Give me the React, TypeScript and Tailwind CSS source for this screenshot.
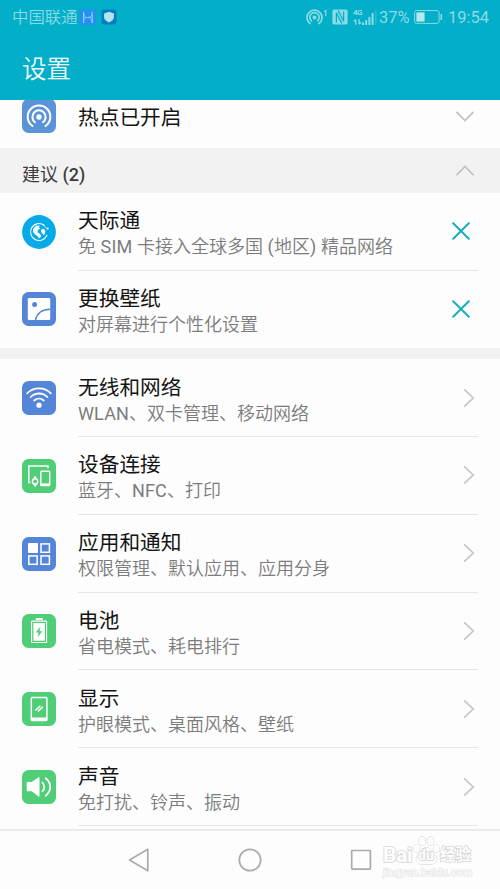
import type { ReactNode } from "react";

const ICON_BLUE = "#5585d9";
const ICON_GREEN = "#50cd77";

function Tile({ color, children }: { color: string; children: ReactNode }) {
    return (
        <svg width="34" height="34" viewBox="0 0 34 34" fill="none" className="block shrink-0">
            <rect width="34" height="34" rx="6.5" fill={color} />
            {children}
        </svg>
    );
}

function HotspotIcon() {
    return (
        <Tile color="#5b93d8">
            <circle cx="17" cy="18" r="2.7" fill="#fff" />
            <g stroke="#fff" strokeWidth="2" strokeLinecap="round">
                <path d="M13 23.2A6.6 6.6 0 1 1 21 23.2" />
                <path d="M10.5 27A11.3 11.3 0 1 1 23.5 27" />
            </g>
        </Tile>
    );
}

function GlobeIcon() {
    return (
        <svg width="34" height="34" viewBox="0 0 34 34" fill="none" className="block shrink-0">
            <circle cx="17" cy="17" r="16.9" fill="#05aaeb" />
            <path
                d="M24.9 20.2A8.5 8.5 0 1 1 22.3 10.3"
                stroke="#fff"
                strokeWidth="1.1"
                strokeLinecap="round"
            />
            <path d="M21.5 10.3l3.3 3.2" stroke="#fff" strokeWidth="1" strokeDasharray="1.2 .8" />
            <circle cx="25.6" cy="13.6" r="1.1" fill="#fff" />
            <path d="M10.9 14.2l3-3.5 3.8-.2-.9 1.7 1.5 1.3-2.2 1.3-.6 2.4 2.6 1.9 1.300 2-2.200 2.500-1.800-2.600-2.300-1.400-1.800-2.300z" fill="#fff" />
            <path d="M19.2 14.5l3.1-.7 1.1 2.9-1.4 3.5-1.4-1.500-1.500-1.800z" fill="#fff" />
        </svg>
    );
}

function WallpaperIcon() {
    return (
        <Tile color={ICON_BLUE}>
            <rect x="5.8" y="6" width="22.4" height="22" rx="1.2" fill="#fff" />
            <circle cx="12.6" cy="12.4" r="2.5" fill={ICON_BLUE} />
            <path d="M13.4 28C15 21.5 20.5 17.4 28.2 17.3" stroke={ICON_BLUE} strokeWidth="1.5" />
        </Tile>
    );
}

function WifiIcon() {
    return (
        <Tile color={ICON_BLUE}>
            <circle cx="17" cy="24.2" r="2.6" fill="#fff" />
            <g stroke="#fff" strokeWidth="1.8" strokeLinecap="round">
                <path d="M5.2 12.3C11.5 5.8 22.5 5.8 28.8 12.3" />
                <path d="M8.7 16C13.2 11.3 20.8 11.3 25.3 16" />
                <path d="M12.2 19.5C15 16.9 19 16.9 21.8 19.5" />
            </g>
        </Tile>
    );
}

function DevicesIcon() {
    return (
        <Tile color={ICON_GREEN}>
            <path d="M8.3 23.6H6.8V6.9H26V9.2" stroke="#fff" strokeWidth="1.5" />
            <rect x="18.8" y="12.2" width="8.9" height="14.4" rx=".8" stroke="#fff" strokeWidth="1.5" />
            <path d="M18.4 25.4h9.6" stroke="#fff" strokeWidth="2" />
            <circle cx="13.1" cy="22.4" r="2.6" stroke="#fff" strokeWidth="1.5" />
            <path d="M11.6 19.9l.5-2.6h2l.5 2.6zM11.6 24.9l.5 2.6h2l.5-2.6z" fill="#fff" />
        </Tile>
    );
}

function AppsIcon() {
    return (
        <Tile color={ICON_BLUE}>
            <rect x="6" y="6.1" width="10" height="9.9" rx=".8" fill="#fff" />
            <g stroke="#fff" strokeWidth="1.5">
                <rect x="19" y="6.9" width="8.4" height="8.4" />
                <rect x="6.8" y="18.9" width="8.4" height="8.4" />
                <rect x="19" y="18.9" width="8.4" height="8.4" />
            </g>
        </Tile>
    );
}

function BatteryIcon() {
    return (
        <Tile color={ICON_GREEN}>
            <rect x="13.8" y="4.1" width="6.8" height="2" rx=".4" fill="#fff" />
            <rect x="9.6" y="7.1" width="15" height="21.4" rx=".6" stroke="#fff" strokeWidth="1.1" />
            <rect x="11.4" y="9" width="11.4" height="17.7" fill="#fff" />
            <path d="M18.3 12.7l-4.6 5.9h2.8l-.8 4.5 4.6-5.9h-2.8z" fill={ICON_GREEN} />
        </Tile>
    );
}

function DisplayIcon() {
    return (
        <Tile color={ICON_GREEN}>
            <rect x="9.3" y="5.6" width="15.6" height="23" rx="1" stroke="#fff" strokeWidth="1.5" />
            <path d="M9 25.5h16.2v2.8H9z" fill="#fff" />
            <path d="M13.4 18.500l5-4.8M15.900 19.500l5-4.8" stroke="#fff" strokeWidth="1.5" />
        </Tile>
    );
}

function SoundIcon() {
    return (
        <Tile color={ICON_GREEN}>
            <path d="M5.2 12.4h4.6l7.2-5v19l-7.2-5.6H5.2z" fill="#fff" stroke="#fff" strokeLinejoin="round" />
            <path d="M20.4 12.6c2.5 2.4 2.5 6.2 0 8.6M23.7 8.3c6 4.6 6 12.6 0 17.4" stroke="#fff" strokeWidth="1.8" strokeLinecap="round" />
        </Tile>
    );
}

function CloseMark() {
    return (
        <svg width="18" height="18" viewBox="0 0 18 18" fill="none" className="mr-2">
            <path d="M1.2 1.2l15.6 15.6M16.8 1.2L1.2 16.8" stroke="#18aebd" strokeWidth="2" strokeLinecap="round" />
        </svg>
    );
}

function RightArrow() {
    return (
        <svg width="12" height="18" viewBox="0 0 12 18" fill="none" className="mr-[3px]">
            <path d="M1.7 .9L10.2 9l-8.5 8.1" stroke="#c6c6c6" strokeWidth="1.7" strokeLinecap="round" />
        </svg>
    );
}

function FoldArrow({ up }: { up?: boolean }) {
    return (
        <svg width="18" height="11" viewBox="0 0 18 11" fill="none" className="mr-[26px]">
            <path
                d={up ? "M1 9.7L9 1.4l8 8.3" : "M1 1.3l8 8.3 8-8.3"}
                stroke="#c2c2c2"
                strokeWidth="1.7"
                strokeLinecap="round"
            />
        </svg>
    );
}

function StatusBar() {
    return (
        <div className="flex h-[34px] items-center justify-between pr-[11px] pl-3 text-[#8bdbe5]">
            <div className="flex items-center">
                <span className="w-[67px] pt-px text-[16.4px] leading-[34px] font-[350] whitespace-nowrap">中国联通</span>
                <svg width="18" height="17" viewBox="0 0 18 17" fill="none">
                    <rect x=".5" y=".5" width="16.5" height="16" rx="3" fill="#2490ef" />
                    <path d="M4.6 2.8v11.4M13.2 2.8v11.4M4.6 4c.6 4.6 2.500 4.500 4.300 4.500s3.700 0 4.300 4.500M4.600 11.500c1.500-3 3-3 4.300-3s3-.2 4.300-2.800" stroke="#9ad5fa" />
                </svg>
                <svg width="16" height="16" viewBox="0 0 16 16" className="ml-1">
                    <rect x=".5" y=".5" width="15" height="15" rx="3" fill="#087cc5" />
                    <path d="M8 2.8l4.9 1.7v3.8c0 2.4-2.4 4-4.9 5.2-2.5-1.2-4.9-2.8-4.9-5.2V4.5z" fill="#b3e5ed" />
                </svg>
            </div>
            <div className="flex items-center">
                <svg width="22" height="18" viewBox="0 0 22 18" fill="none" stroke="currentColor">
                    <circle cx="8.5" cy="9.5" r="2" fill="currentColor" stroke="none" />
                    <path d="M5.8 13.2a4.7 4.7 0 1 1 5.4 0M4.5 16a7.5 7.5 0 1 1 8 0" strokeWidth="1.7" />
                    <path d="M18 3.4l1.8-1V8" strokeWidth="1.2" />
                </svg>
                <svg width="16" height="16" viewBox="0 0 16 16" fill="none" className="ml-1">
                    <rect x=".4" y=".4" width="15.2" height="15.2" rx="1.5" fill="currentColor" />
                    <path d="M4.4 13.6V3.8l5.400 10.800M11.600 2.400v9.800L6.200 1.400" stroke="#02aec8" strokeWidth="1.2" />
                </svg>
                <div className="ml-[5px] flex h-4 w-[26px] items-end">
                    <div className="flex h-4 w-[9px] flex-col justify-between">
                        <span className="text-[8px] leading-[8px] font-bold tracking-[-0.5px]">4G</span>
                        <svg width="9" height="6" viewBox="0 0 9 6" fill="none" stroke="currentColor" strokeWidth="1.3">
                            <path d="M2.8 6V.8M.8 2.5l2-2M6 0v5.2M6 5.2l2-2" />
                        </svg>
                    </div>
                    <svg width="16" height="15" viewBox="0 0 16 15" fill="currentColor" className="shrink-0">
                        <path d="M0 12.5h2V15H0zM3.2 10h2v5h-2zM6.4 7h2v8h-2zM9.6 3h2v12h-2z" />
                        <path d="M13.4 0h.9v15h-.9z" opacity=".5" />
                    </svg>
                </div>
                <span className="w-[31px] pt-px text-[16.5px] leading-[34px] whitespace-nowrap">37%</span>
                <svg width="29" height="14" viewBox="0 0 29 14" fill="none" className="ml-[4px]">
                    <rect x=".6" y=".6" width="24.5" height="12.8" rx="2" stroke="currentColor" />
                    <rect x="2.4" y="2.4" width="8.2" height="9.2" fill="#b5e9ee" />
                    <path d="M27.3 4v6" stroke="currentColor" strokeWidth="1.6" />
                </svg>
                <span className="ml-[5px] pt-px text-[16.5px] leading-[34px]">19:54</span>
            </div>
        </div>
    );
}

// Latin runs are set one step heavier than the Chinese text around them
function Detail({ text }: { text: string }) {
    return (
        <div className="text-[18px] leading-[25px] font-[350] text-[#7c7c7c]">
            {text.split(/([A-Za-z() ]+)/).map((part, i) =>
                i % 2 ? (
                    <span key={i} className="font-normal tracking-[0.15px]">
                        {part}
                    </span>
                ) : (
                    part
                )
            )}
        </div>
    );
}

interface RowProps {
    icon: ReactNode;
    title: string;
    detail: string;
    action: ReactNode;
    last?: boolean;
}

function SettingRow({ icon, title, detail, action, last }: RowProps) {
    return (
        <div className="flex h-[77.8px] items-center pl-[22px]">
            {icon}
            <div
                className={`mr-[22px] ml-[22px] flex h-full flex-1 items-center justify-between border-b ${
                    last ? "border-transparent" : "border-[#e6e6e6]"
                }`}
            >
                <div className="pt-[5px] whitespace-nowrap">
                    <div className="text-[20.7px] leading-[26px] text-[#141414]">{title}</div>
                    <Detail text={detail} />
                </div>
                {action}
            </div>
        </div>
    );
}

const suggestions = [
    { icon: <GlobeIcon />, title: "天际通", detail: "免 SIM 卡接入全球多国 (地区) 精品网络" },
    { icon: <WallpaperIcon />, title: "更换壁纸", detail: "对屏幕进行个性化设置" },
];

const settings = [
    { icon: <WifiIcon />, title: "无线和网络", detail: "WLAN、双卡管理、移动网络" },
    { icon: <DevicesIcon />, title: "设备连接", detail: "蓝牙、NFC、打印" },
    { icon: <AppsIcon />, title: "应用和通知", detail: "权限管理、默认应用、应用分身" },
    { icon: <BatteryIcon />, title: "电池", detail: "省电模式、耗电排行" },
    { icon: <DisplayIcon />, title: "显示", detail: "护眼模式、桌面风格、壁纸" },
    { icon: <SoundIcon />, title: "声音", detail: "免打扰、铃声、振动" },
];

function Watermark() {
    return (
        <div className="absolute top-[4px] left-[383px] w-[92px] text-[#fdfdfd] [paint-order:stroke_fill]">
            <div className="flex h-[31px] items-end [-webkit-text-stroke:1.6px_#d6d6d6]">
                <span className="w-[30px] text-[21px] leading-[21px] font-bold tracking-[-0.3px]">Bai</span>
                <div className="relative h-[31px] w-[27px]">
                    <svg width="27" height="31" viewBox="0 0 27 31" fill="#fdfdfd" stroke="#d0d0d0" strokeWidth="1">
                        <ellipse cx="3.7" cy="13.5" rx="3" ry="4" />
                        <ellipse cx="9.3" cy="6" rx="3.2" ry="4.5" />
                        <ellipse cx="17.5" cy="6" rx="3.2" ry="4.5" />
                        <ellipse cx="23.2" cy="13.5" rx="3" ry="4" />
                        <path d="M13.5 12.5c4 0 5 4.500 8 7 3.500 3 3 9-2 9.500H7.500c-5-.5-5.500-6.500-2-9.500 3-2.500 4-7 8-7z" />
                    </svg>
                    <span className="absolute bottom-[4px] left-[5px] text-[14px] leading-[14px] font-bold">du</span>
                </div>
                <span className="text-[15.5px] leading-[22px] font-bold whitespace-nowrap">经验</span>
            </div>
            <div className="text-[11px] leading-[14px] whitespace-nowrap [-webkit-text-stroke:1px_#dedede]">
                jingyan.baidu.com
            </div>
        </div>
    );
}

function NavBar() {
    return (
        <div className="relative h-[60px] border-t-2 border-[#ebebeb]">
            <div className="flex h-[57px] items-center justify-between pr-[128px] pl-[128px]">
                <svg width="22" height="24" viewBox="0 0 22 24" fill="none">
                    <path d="M1.5 12L19.8 1.2v21.6z" stroke="#ababab" strokeWidth="1.7" strokeLinejoin="round" />
                </svg>
                <svg width="24" height="24" viewBox="0 0 24 24" fill="none">
                    <circle cx="12" cy="12" r="10.7" stroke="#ababab" strokeWidth="1.7" />
                </svg>
                <svg width="22" height="22" viewBox="0 0 22 22" fill="none">
                    <rect x="1.7" y="1.5" width="18.7" height="18.7" rx=".6" stroke="#ababab" strokeWidth="1.7" />
                </svg>
            </div>
            <Watermark />
        </div>
    );
}

function App() {
    return (
        <div className="flex h-[889px] w-[500px] flex-col overflow-hidden bg-[#fdfdfd] font-[Roboto,'Noto_Sans_CJK_SC',sans-serif]">
            <header className="h-[100px] shrink-0 bg-[#02aec8]">
                <StatusBar />
                <h1 className="pt-[2px] pl-[22px] text-[24.5px] leading-[68px] font-[350] text-[#f0fbfc]">设置</h1>
            </header>
            <main className="h-[729px] shrink-0 overflow-hidden">
                <div className="flex h-[48.4px] items-start justify-between overflow-hidden">
                    <div className="flex pl-[22px]">
                        <div className="-mt-px">
                            <HotspotIcon />
                        </div>
                        <span className="ml-[22px] text-[20.7px] leading-[36px] text-[#141414]">热点已开启</span>
                    </div>
                    <div className="pt-[11px]">
                        <FoldArrow />
                    </div>
                </div>
                <div className="flex h-[44.4px] justify-between bg-[#f2f2f2] pl-[22px]">
                    <span className="pt-[9px] text-[18px] leading-[35px] text-[#3c3c3c]">
                        建议 <span className="font-medium">(2)</span>
                    </span>
                    <div className="pt-[17px]">
                        <FoldArrow up />
                    </div>
                </div>
                {suggestions.map((item, i) => (
                    <SettingRow key={item.title} {...item} action={<CloseMark />} last={i === suggestions.length - 1} />
                ))}
                <div className="h-[10.8px] bg-[#f2f2f2]" />
                {settings.map((item) => (
                    <SettingRow key={item.title} {...item} action={<RightArrow />} />
                ))}
            </main>
            <NavBar />
        </div>
    );
}

export default App;
